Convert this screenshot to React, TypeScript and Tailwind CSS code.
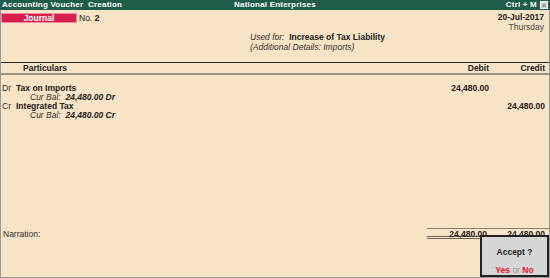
import { X } from 'lucide-react';

export default function App() {
  return (
    <div className="relative flex h-[278px] w-[550px] flex-col overflow-hidden bg-[#f7e3c5] font-['Liberation_Sans',Arial,sans-serif] text-[8.5px] leading-[10px] text-[#222]">
      {/* title bar */}
      <div className="grid h-[10px] grid-cols-3 items-center bg-[#1f5c4a] px-[2px] text-[8px] font-bold tracking-[0.2px] text-white">
        <span>Accounting Voucher&nbsp; Creation</span>
        <span className="text-center">National Enterprises</span>
        <span className="flex items-center justify-end gap-[3px]">
          Ctrl + M
          <span className="flex h-[8px] w-[8px] items-center justify-center border border-white bg-[#d8d8d8] text-[#1f5c4a]">
            <X size={7} strokeWidth={3} />
          </span>
        </span>
      </div>

      <div className="flex flex-1 flex-col border-x border-b border-[#9a9a9a]">
        {/* voucher head */}
        <div className="flex h-[52px] flex-col">
          <div className="flex h-[22px] justify-between">
            <div className="flex items-start gap-[2px] pt-[3px]">
              <div className="flex h-[10px] w-[76px] items-center justify-center border border-[#f08aa0] bg-[#d81f50] text-[8.5px] font-bold text-white">
                Journal
              </div>
              <span className="leading-[10px]">
                No. <b className="text-[9px]">2</b>
              </span>
            </div>
            <div className="pr-[5px] pt-[2px] text-right">
              <div className="font-bold">20-Jul-2017</div>
              <div className="text-[#444]">Thursday</div>
            </div>
          </div>
          <div className="pl-[249px]">
            <div>
              <i className="text-[#333]">Used for:</i>&nbsp; <b>Increase of Tax Liability</b>
            </div>
            <div className="italic text-[#333]">(Additional Details: Imports)</div>
          </div>
        </div>

        {/* column header */}
        <div className="grid h-[13px] grid-cols-[1fr_60px_56px] items-center border-t border-b-2 border-t-[#2a2a2a] border-b-[#9c907e] pr-[4px] font-bold">
          <span className="pl-[22px]">Particulars</span>
          <span className="text-right">Debit</span>
          <span className="text-right">Credit</span>
        </div>

        {/* entries */}
        <div className="mt-[9px] flex flex-col leading-[9px]">
          <div className="grid grid-cols-[1fr_60px_56px] pr-[4px]">
            <span>
              <span className="inline-block w-[15px] pl-[1px] text-[#333]">Dr</span>
              <b>Tax on Imports</b>
            </span>
            <b className="text-right">24,480.00</b>
            <span />
          </div>
          <div className="pl-[29px] italic text-[#333]">
            Cur Bal:&nbsp; <b className="text-[#222]">24,480.00 Dr</b>
          </div>
          <div className="grid grid-cols-[1fr_60px_56px] pr-[4px]">
            <span>
              <span className="inline-block w-[15px] pl-[1px] text-[#333]">Cr</span>
              <b>Integrated Tax</b>
            </span>
            <span />
            <b className="text-right">24,480.00</b>
          </div>
          <div className="pl-[29px] italic text-[#333]">
            Cur Bal:&nbsp; <b className="text-[#222]">24,480.00 Cr</b>
          </div>
        </div>

        <div className="flex-1" />

        {/* narration + totals */}
        <div className="flex h-[11px] items-center">
          <span className="flex-1 pl-[2px] text-[#333]">Narration:</span>
          <div className="grid h-full w-[122px] grid-cols-[60px_1fr] items-center border-t border-b-[3px] border-double border-t-[#8a8072] border-b-[#6e6658] pr-[4px] font-bold">
            <span className="text-right">24,480.00</span>
            <span className="text-right">24,480.00</span>
          </div>
        </div>
        <div className="h-[38px]" />
      </div>

      {/* accept prompt */}
      <div className="absolute bottom-[1px] right-[1px] flex h-[42px] w-[69px] flex-col items-center justify-between border-2 border-[#222] bg-[#d6d6d6] pt-[10px]">
        <span className="font-bold">Accept ?</span>
        <span className="font-bold text-[#e8101c]">
          Yes <span className="font-normal text-[#999]">or</span> No
        </span>
      </div>
    </div>
  );
}
